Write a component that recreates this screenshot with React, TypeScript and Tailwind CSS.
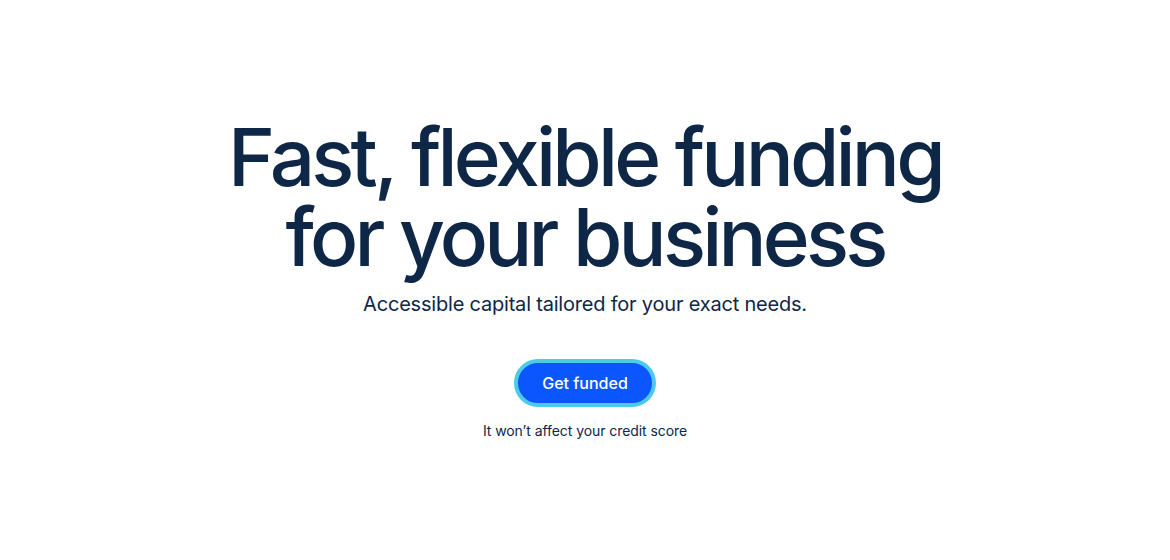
export default function App() {
  return (
    <div className="w-full h-[560px] bg-white flex flex-col items-center" style={{ fontFamily: 'Inter, "Noto Sans", sans-serif' }}>
      <h1 className="mt-[117px] text-[80px] leading-[80px] font-medium tracking-[-0.048em] text-[#0e2746] text-center">
        Fast, flexible funding
        <br />
        for your business
      </h1>
      <p className="mt-[13px] text-[20px] leading-[28px] tracking-[-0.01em] text-[#0e2746]">Accessible capital tailored for your exact needs.</p>
      <button className="mt-[41px] h-[48px] px-[24px] rounded-full bg-[#0b56ff] border-[4px] border-[#4ccbe8] text-white text-[16px] font-medium">
        Get funded
      </button>
      <p className="mt-[13px] text-[14px] tracking-[-0.005em] text-[#0e2746]">It won’t affect your credit score</p>
    </div>
  );
}
